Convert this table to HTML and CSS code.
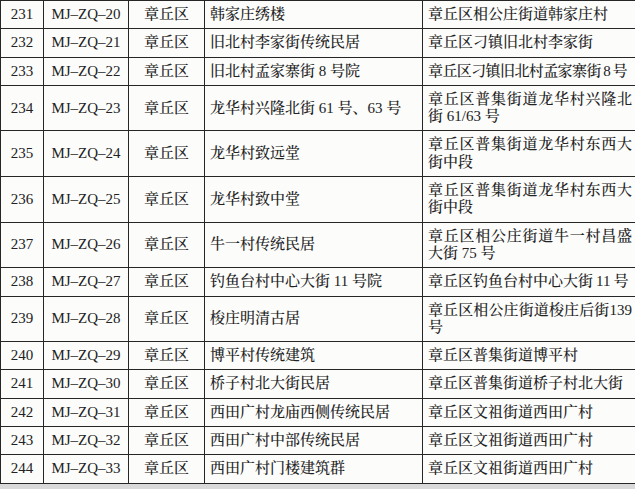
FILE: index.html
```html
<!DOCTYPE html>
<html lang="zh-CN">
<head>
<meta charset="utf-8">
<title>章丘区传统民居名录</title>
<link rel="stylesheet" href="styles.css">
</head>
<body>
<table class="list">
  <colgroup>
    <col class="c-no"><col class="c-code"><col class="c-area"><col class="c-name"><col class="c-addr">
  </colgroup>
  <tbody>
    <tr><td class="no">231</td><td class="code">MJ–ZQ–20</td><td class="area">章丘区</td><td class="name">韩家庄绣楼</td><td class="addr">章丘区相公庄街道韩家庄村</td></tr>
    <tr><td class="no">232</td><td class="code">MJ–ZQ–21</td><td class="area">章丘区</td><td class="name">旧北村李家街传统民居</td><td class="addr">章丘区刁镇旧北村李家街</td></tr>
    <tr><td class="no">233</td><td class="code">MJ–ZQ–22</td><td class="area">章丘区</td><td class="name">旧北村孟家寨街 8 号院</td><td class="addr nowrap tight">章丘区刁镇旧北村孟家寨街&#8201;8&#8201;号</td></tr>
    <tr><td class="no">234</td><td class="code">MJ–ZQ–23</td><td class="area">章丘区</td><td class="name">龙华村兴隆北街 61 号、63 号</td><td class="addr">章丘区普集街道龙华村兴隆北街 61/63 号</td></tr>
    <tr><td class="no">235</td><td class="code">MJ–ZQ–24</td><td class="area">章丘区</td><td class="name">龙华村致远堂</td><td class="addr">章丘区普集街道龙华村东西大街中段</td></tr>
    <tr><td class="no">236</td><td class="code">MJ–ZQ–25</td><td class="area">章丘区</td><td class="name">龙华村致中堂</td><td class="addr">章丘区普集街道龙华村东西大街中段</td></tr>
    <tr><td class="no">237</td><td class="code">MJ–ZQ–26</td><td class="area">章丘区</td><td class="name">牛一村传统民居</td><td class="addr">章丘区相公庄街道牛一村昌盛大街 75 号</td></tr>
    <tr><td class="no">238</td><td class="code">MJ–ZQ–27</td><td class="area">章丘区</td><td class="name">钓鱼台村中心大街 11 号院</td><td class="addr nowrap">章丘区钓鱼台村中心大街&#8201;11&#8201;号</td></tr>
    <tr><td class="no">239</td><td class="code">MJ–ZQ–28</td><td class="area">章丘区</td><td class="name">梭庄明清古居</td><td class="addr">章丘区相公庄街道梭庄后街139号</td></tr>
    <tr><td class="no">240</td><td class="code">MJ–ZQ–29</td><td class="area">章丘区</td><td class="name">博平村传统建筑</td><td class="addr">章丘区普集街道博平村</td></tr>
    <tr><td class="no">241</td><td class="code">MJ–ZQ–30</td><td class="area">章丘区</td><td class="name">桥子村北大街民居</td><td class="addr">章丘区普集街道桥子村北大街</td></tr>
    <tr><td class="no">242</td><td class="code">MJ–ZQ–31</td><td class="area">章丘区</td><td class="name">西田广村龙庙西侧传统民居</td><td class="addr">章丘区文祖街道西田广村</td></tr>
    <tr><td class="no">243</td><td class="code">MJ–ZQ–32</td><td class="area">章丘区</td><td class="name">西田广村中部传统民居</td><td class="addr">章丘区文祖街道西田广村</td></tr>
    <tr><td class="no">244</td><td class="code">MJ–ZQ–33</td><td class="area">章丘区</td><td class="name">西田广村门楼建筑群</td><td class="addr">章丘区文祖街道西田广村</td></tr>
  </tbody>
</table>
</body>
</html>
```
FILE: styles.css
```css
html, body {
  margin: 0;
  padding: 0;
  overflow: hidden;
  background: #d9d9d9;
}

.list {
  border-collapse: collapse;
  table-layout: fixed;
  width: 637px;
  background: #fcfcfb;
  color: #222222;
  font-family: "Liberation Serif", "Noto Serif CJK SC", "Noto Sans CJK SC", serif;
  font-size: 15px;
  font-weight: 500;
  line-height: 17.3px;
}

.c-no { width: 43px; }
.c-code { width: 85px; }
.c-area { width: 76px; }
.c-name { width: 218px; }
.c-addr { width: 215px; }

.list td {
  border: 1px solid #262626;
  padding: 5px 5px;
  vertical-align: middle;
}

.no, .code, .area {
  text-align: center;
}

.no {
  padding-left: 2px;
  padding-right: 2px;
}

.name {
  text-align: left;
}

.addr {
  text-align: justify;
  text-justify: inter-character;
  border-right: 0;
  padding-right: 3px;
}

.nowrap {
  white-space: nowrap;
  text-align: left;
}

.tight {
  letter-spacing: -0.6px;
}
```
